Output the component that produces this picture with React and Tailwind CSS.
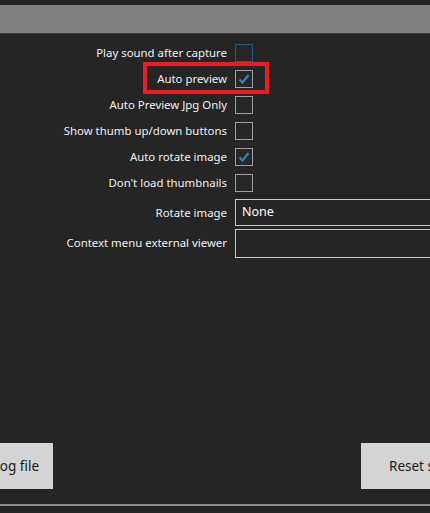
import React from "react";

function Check({ checked, hover }) {
  return (
    <div
      className={`w-[18px] h-[18px] border flex items-center justify-center ${
        hover ? "border-[#1f5f86]" : "border-[#a0a0a0]"
      } bg-[#262626]`}
    >
      {checked && (
        <svg width="14" height="14" viewBox="0 0 14 14">
          <path d="M2.5 7.5 L5.5 10.5 L11.5 3" fill="none" stroke="#2585c4" strokeWidth="2.3" />
        </svg>
      )}
    </div>
  );
}

const rows = [
  { label: "Play sound after capture", checked: false, hover: true },
  { label: "Auto preview", checked: true, red: true },
  { label: "Auto Preview Jpg Only", checked: false },
  { label: "Show thumb up/down buttons", checked: false },
  { label: "Auto rotate image", checked: true },
  { label: "Don't load thumbnails", checked: false },
];

export default function App() {
  return (
    <div
      className="w-[430px] h-[513px] overflow-hidden bg-[#252525] text-white flex flex-col relative"
      style={{ fontFamily: '"Noto Sans", "Open Sans", sans-serif' }}
    >
      <div className="h-[5px] bg-[#232323]" />
      <div className="h-[29px] bg-[#808080] border-b border-[#3a3a3a]" />
      <div className="flex flex-col pt-[6px] text-[11.4px]">
        {rows.map((r) => (
          <div key={r.label} className="h-[26px] flex items-center relative">
            <div className="w-[227px] shrink-0 text-right text-[#f0f0f0]">{r.label}</div>
            <div className="ml-[8px] shrink-0">
              <Check checked={r.checked} hover={r.hover} />
            </div>
            {r.red && (
              <div className="absolute left-[143px] top-[-4px] w-[126px] h-[32px] border-[4px] border-[#ec1c24]" />
            )}
          </div>
        ))}
        <div className="h-[29px] flex items-center mt-[2px]">
          <div className="w-[227px] shrink-0 text-right text-[#f0f0f0]">Rotate image</div>
          <div className="ml-[8px] shrink-0 w-[220px] h-[27px] border border-[#c8c8c8] flex items-center pl-[6px] text-[12.5px]">
            None
          </div>
        </div>
        <div className="h-[30px] flex items-center mt-[1px]">
          <div className="w-[227px] shrink-0 text-right text-[#f0f0f0]">Context menu external viewer</div>
          <div className="ml-[8px] shrink-0 w-[220px] h-[29px] border border-[#c8c8c8]" />
        </div>
      </div>
      <div className="flex-1" />
      <div className="flex justify-between items-center h-[46px] mb-[15px] text-[13.5px] text-[#1a1a1a]">
        <div className="-ml-[56px] w-[109px] h-[46px] bg-[#d4d4d4] flex items-center justify-center">
          Open log file
        </div>
        <div className="w-[110px] h-[46px] -mr-[41px] bg-[#d4d4d4] flex items-center pl-[28px] whitespace-nowrap">
          Reset settings
        </div>
      </div>
      <div className="h-[2px] bg-[#8c8c8c]" />
      <div className="h-[7px] bg-[#252525]" />
    </div>
  );
}
